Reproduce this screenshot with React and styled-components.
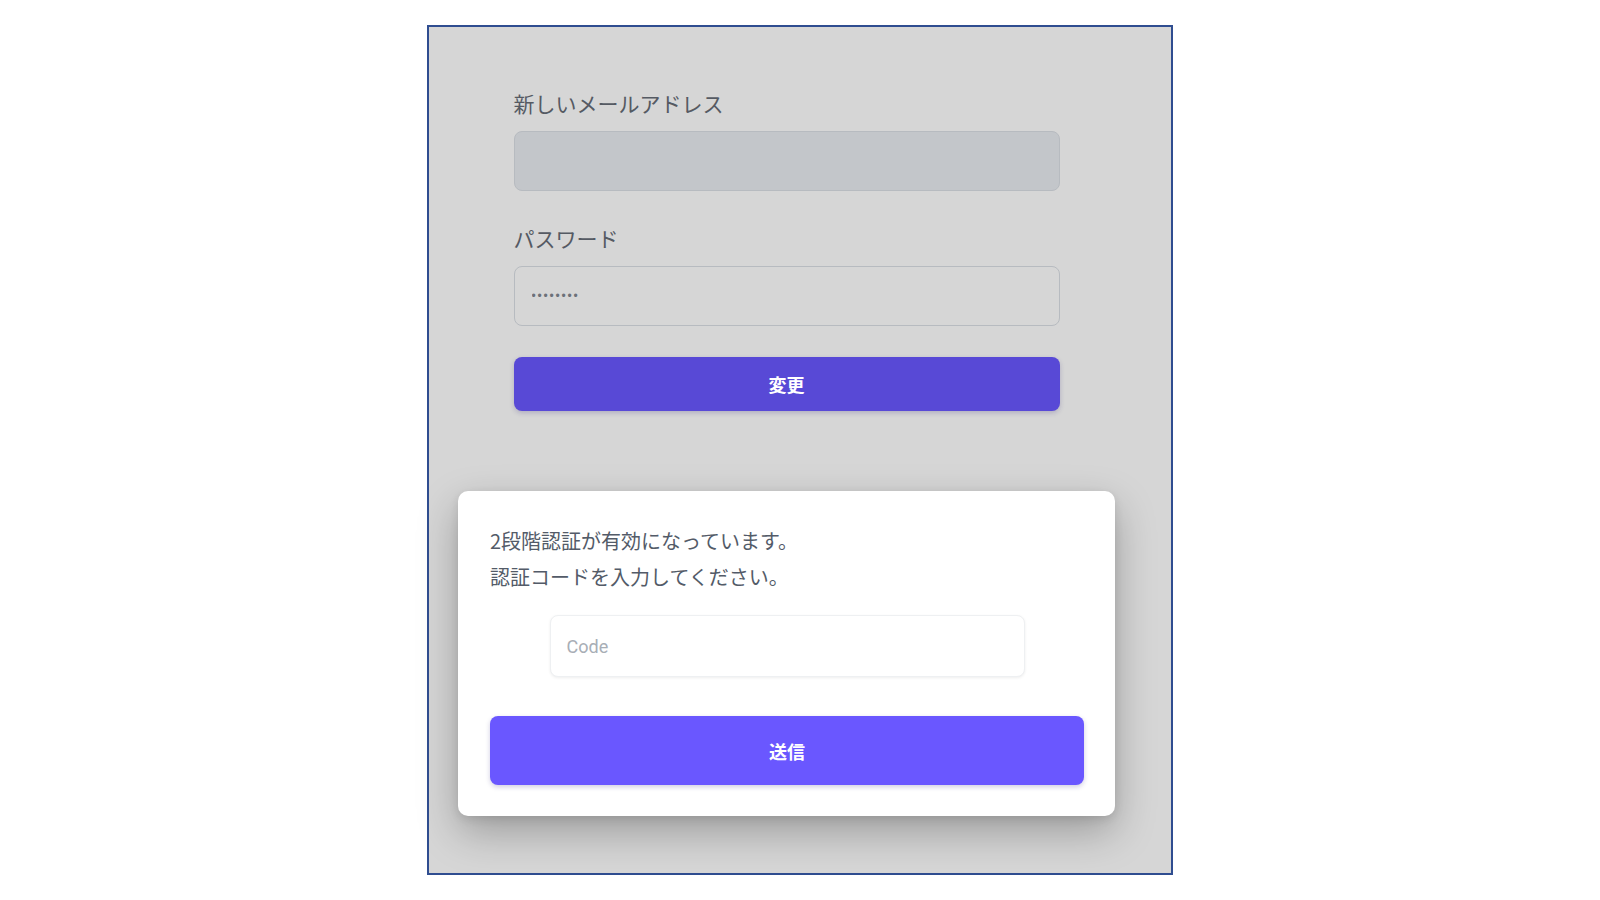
import styled, { createGlobalStyle } from "styled-components";

const GlobalStyle = createGlobalStyle`
  html, body {
    margin: 0;
    background: #ffffff;
  }
  body {
    font-family: "Noto Sans CJK JP", "Noto Sans", sans-serif;
  }
`;

const Page = styled.div`
  width: 1600px;
  height: 900px;
  box-sizing: border-box;
  padding-top: 25px;
  display: flex;
  justify-content: center;
`;

const Frame = styled.div`
  box-sizing: border-box;
  width: 746px;
  height: 850px;
  border: 2px solid #2f4d90;
  background: #d6d6d6;
  padding: 61px 0 0 29px;
`;

const Column = styled.div`
  width: 657px;
  display: flex;
  flex-direction: column;
`;

const Form = styled.form`
  width: 546px;
  align-self: center;
  display: flex;
  flex-direction: column;
  margin: 0;
`;

const Label = styled.label`
  font-size: 21px;
  line-height: 30px;
  color: #555a63;
  margin: ${({ $first }) => ($first ? "0" : "32px")} 0 13px;
`;

const Field = styled.input`
  box-sizing: border-box;
  height: 60px;
  width: 100%;
  border: 1px solid #b7bbc0;
  border-radius: 8px;
  background: ${({ $bg }) => $bg};
  padding: 0 17px;
  font-family: "Liberation Sans", sans-serif;
  font-size: 12px;
  letter-spacing: 1.8px;
  color: #6c7179;
  outline: none;
`;

const Button = styled.button`
  box-sizing: border-box;
  width: 100%;
  border: none;
  border-radius: 8px;
  background: ${({ $bg }) => $bg};
  height: ${({ $h }) => $h}px;
  margin-top: ${({ $mt }) => $mt}px;
  color: #ffffff;
  font-family: "Noto Sans CJK JP", sans-serif;
  font-size: 18px;
  font-weight: 700;
  box-shadow: 0 2px 5px rgba(40, 30, 120, 0.22);
  cursor: pointer;
`;

const Card = styled.div`
  margin-top: 80px;
  background: #ffffff;
  border-radius: 10px;
  padding: 32px 31px 31px 32px;
  display: flex;
  flex-direction: column;
  box-shadow: 0 16px 40px rgba(0, 0, 0, 0.27), 0 3px 10px rgba(0, 0, 0, 0.1);
`;

const Message = styled.p`
  margin: 0;
  font-size: 20px;
  line-height: 36px;
  color: #535b68;
`;

const CodeInput = styled.input`
  box-sizing: border-box;
  align-self: center;
  width: 475px;
  height: 62px;
  margin-top: 20px;
  border: 1px solid #eef0f2;
  border-radius: 8px;
  background: #ffffff;
  padding: 0 16px;
  font-family: Roboto, "Liberation Sans", sans-serif;
  font-size: 18px;
  color: #333;
  outline: none;
  box-shadow: 0 1px 3px rgba(0, 0, 0, 0.07);

  &::placeholder {
    color: #a8aeb6;
  }
`;

export default function App() {
  return (
    <>
      <GlobalStyle />
      <Page>
        <Frame>
          <Column>
            <Form onSubmit={(e) => e.preventDefault()}>
              <Label $first>新しいメールアドレス</Label>
              <Field type="email" $bg="#c3c6ca" readOnly />
              <Label>パスワード</Label>
              <Field type="password" $bg="#d6d6d6" value="12345678" readOnly />
              <Button type="button" $bg="#5849d6" $h={54} $mt={31}>
                変更
              </Button>
            </Form>

            <Card>
              <Message>
                2段階認証が有効になっています。
                <br />
                認証コードを入力してください。
              </Message>
              <CodeInput type="text" placeholder="Code" />
              <Button type="button" $bg="#6a57ff" $h={69} $mt={39}>
                送信
              </Button>
            </Card>
          </Column>
        </Frame>
      </Page>
    </>
  );
}
